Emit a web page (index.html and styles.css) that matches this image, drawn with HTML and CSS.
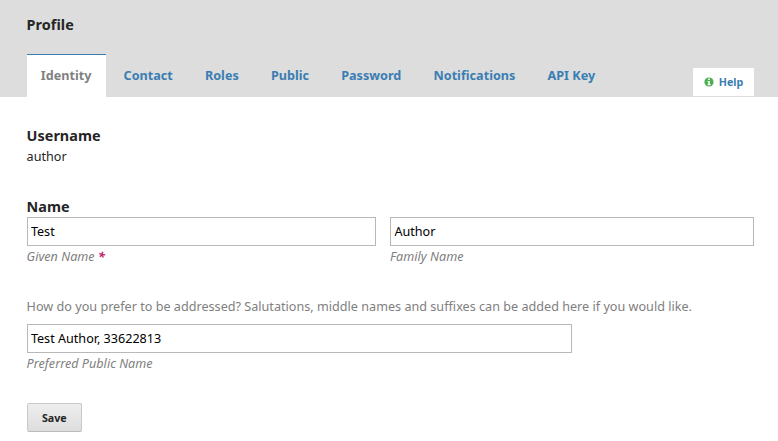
FILE: index.html
```html
<!DOCTYPE html>
<html lang="en">
<head>
<meta charset="utf-8">
<title>Profile</title>
<link rel="stylesheet" href="styles.css">
</head>
<body>
<header class="header">
  <h1 class="title">Profile</h1>
  <div class="bar">
    <nav class="tabs">
      <a class="tab active">Identity</a>
      <a class="tab">Contact</a>
      <a class="tab">Roles</a>
      <a class="tab">Public</a>
      <a class="tab">Password</a>
      <a class="tab">Notifications</a>
      <a class="tab">API Key</a>
    </nav>
    <a class="help"><svg class="icon" viewBox="0 0 10 10"><circle cx="5" cy="5" r="4.6" fill="#4caf50"/><path d="M4.1 1.6h1.8v1.5H4.1zM3.5 3.9h2.4v3h.7v1.3H3.5V6.9h.7V5.1h-.7z" fill="#fff"/></svg>Help</a>
  </div>
</header>
<main class="content">
  <section class="user">
    <h2 class="heading">Username</h2>
    <div class="value">author</div>
  </section>
  <section class="name">
    <h2 class="heading">Name</h2>
    <div class="row">
      <div class="given"><input class="field" type="text" value="Test"><label class="label">Given Name <b class="required">*</b></label></div>
      <div class="family"><input class="field" type="text" value="Author"><label class="label">Family Name</label></div>
    </div>
  </section>
  <section class="preferred">
    <p class="description">How do you prefer to be addressed? Salutations, middle names and suffixes can be added here if you would like.</p>
    <input class="field" type="text" value="Test Author, 33622813"><label class="label">Preferred Public Name</label>
  </section>
  <button class="save">Save</button>
</main>
</body>
</html>
```

FILE: styles.css
```css
* { box-sizing: border-box; }
body { margin: 0; background: #fff; color: #252525; font: 12.6px/20px "Noto Sans", sans-serif; letter-spacing: 0.016px; }
.header { height: 97px; padding: 15px 24px 0 26.6px; background: #ddd; }
.title { margin: 0; font-size: 14.4px; line-height: 20px; letter-spacing: 0.05px; }
.bar { display: flex; justify-content: space-between; align-items: flex-end; height: 43px; margin-top: 19px; }
.tabs { display: flex; align-items: stretch; height: 43px; gap: 3.8px; }
.tab { padding: 11px 14.2px 0; border-top: 1px solid transparent; color: #3a7db3; font-weight: 700; }
.tab.active { background: #fff; border-top-color: #3a7db3; color: #808080; }
.help { display: flex; align-items: center; justify-content: center; gap: 5px; width: 61px; height: 28px; margin-bottom: 1px; border-radius: 1px 1px 0 0; background: #fff; color: #3a7db3; font-size: 10.7px; font-weight: 700; }
.icon { width: 10px; height: 10px; }
.content { padding: 29px 24px 0 26.6px; }
.heading { margin: 0; font-size: 14.4px; line-height: 20px; letter-spacing: 0.03px; }
.value { padding-top: 1px; line-height: 20px; }
.name { margin-top: 30px; }
.row { display: flex; gap: 14.2px; }
.given { width: 349.4px; }
.family { width: 364px; }
.field { display: block; width: 100%; height: 29px; margin: 0; padding: 0 3.3px; border: 1px solid #b8b8b8; border-radius: 0; background: #fff; color: #000; font: 12.6px "Noto Sans", sans-serif; }
.label { display: block; color: #808080; font-style: italic; line-height: 21px; }
.required { color: #c4256a; }
.preferred { width: 545px; margin-top: 30px; }
.description { margin: 0 0 7px; color: #808080; line-height: 20px; white-space: nowrap; }
.save { display: block; width: 55.4px; height: 29px; margin-top: 29px; padding: 0; border: 1px solid #c8c8c8; border-bottom-color: #bbb; border-radius: 2px; background: linear-gradient(#eee, #ddd); color: #252525; font: 700 10.7px "Noto Sans", sans-serif; }
```
